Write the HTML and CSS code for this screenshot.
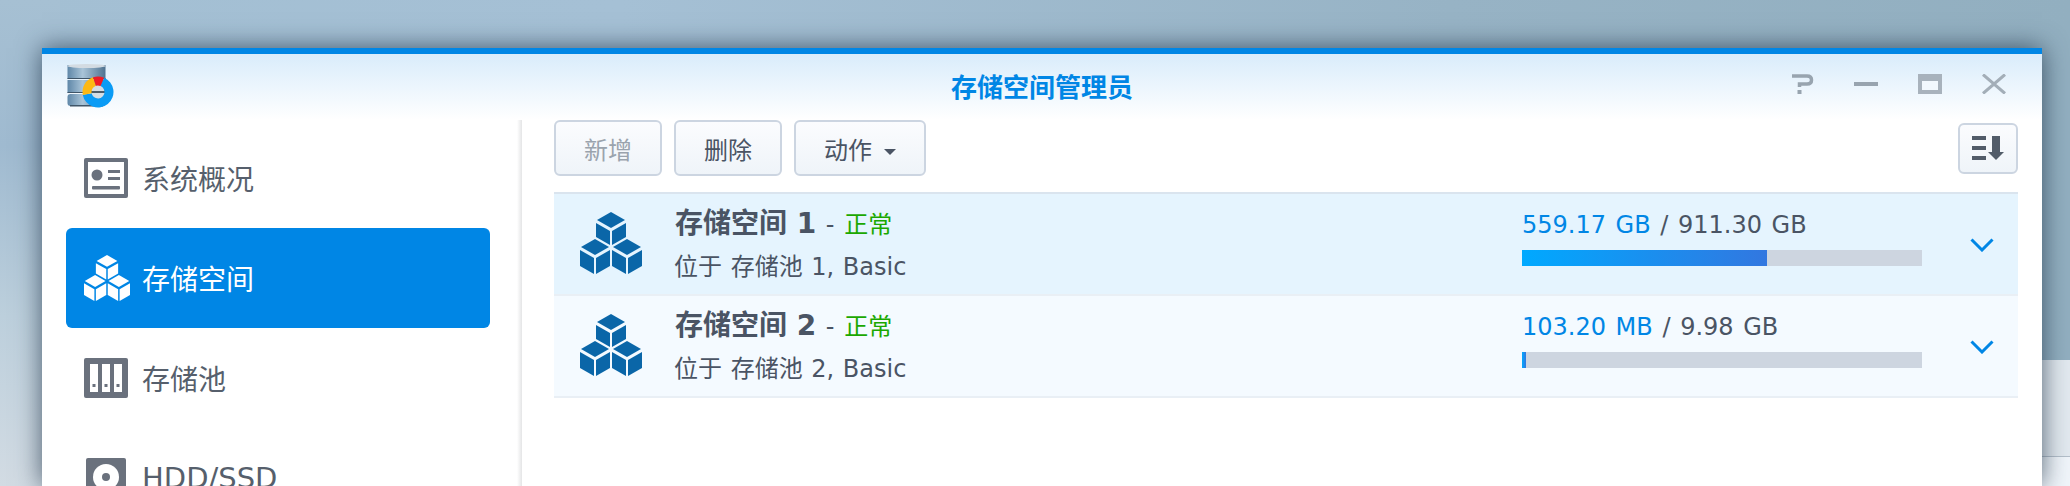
FILE: index.html
```html
<!DOCTYPE html>
<html lang="zh-CN">
<head>
    <meta charset="UTF-8">
    <meta name="viewport" content="width=device-width, initial-scale=1.0">
    <title>存储空间管理员</title>
    <link rel="stylesheet" href="styles.css">
</head>
<body>

<svg class="defs" width="0" height="0">
    <defs>
        <polygon id="cube-top" points="15,0 29,8 15,16 1,8"/>
        <g id="cube-upper">
            <use href="#cube-top"/>
            <polygon points="0,11 14,19 14,33 0,25"/>
            <polygon points="30,11 16,19 16,33 30,25"/>
        </g>
        <g id="cube">
            <use href="#cube-top"/>
            <polygon points="0,11 14,19 14,35 0,27"/>
            <polygon points="30,11 16,19 16,35 30,27"/>
        </g>
        <symbol id="cube-stack" viewBox="0 0 62 62">
            <use href="#cube-upper" x="16" y="0"/>
            <use href="#cube" x="0" y="27"/>
            <use href="#cube" x="32" y="27"/>
        </symbol>
        <linearGradient id="dbMetal" x1="0" x2="1" y1="0" y2="0">
            <stop offset="0" stop-color="#5f87a8"/>
            <stop offset="0.4" stop-color="#a9c4d8"/>
            <stop offset="1" stop-color="#4f7290"/>
        </linearGradient>
    </defs>
</svg>

<!-- window behind, only its edge shows -->
<div class="back-window"></div>

<div class="window">
    <div class="titlebar">
        <svg class="app-icon" width="48" height="44" viewBox="0 0 48 44">
            <rect x="0.5" y="1" width="38" height="14" fill="url(#dbMetal)"/>
            <ellipse cx="19.5" cy="2" rx="19" ry="2" fill="#d3dbe2"/>
            <rect x="0.5" y="14" width="38" height="1" fill="#3f5568"/>
            <rect x="0.5" y="16" width="38" height="13" fill="url(#dbMetal)"/>
            <rect x="0.5" y="28" width="38" height="1" fill="#3f5568"/>
            <rect x="0.5" y="30" width="38" height="12" rx="3" fill="url(#dbMetal)"/>
            <rect x="3" y="41" width="33" height="1.5" fill="#3f5568"/>
            <circle cx="31" cy="28" r="7" fill="#d5dde4"/>
            <rect x="24" y="27" width="14" height="2" fill="#4d5c69"/>
            <path d="M37 13.7 A15.5 15.5 0 1 1 15.8 31 L24.6 29.3 A6.5 6.5 0 1 0 33.5 22 Z" fill="#0a9bf5"/>
            <path d="M15.8 31 A15.5 15.5 0 0 1 26 13.3 L28.9 21.8 A6.5 6.5 0 0 0 24.6 29.3 Z" fill="#fdb813"/>
            <path d="M26 13.3 A15.5 15.5 0 0 1 37 13.7 L33.5 22 A6.5 6.5 0 0 0 28.9 21.8 Z" fill="#ee1c25"/>
        </svg>
        <div class="window-title">存储空间管理员</div>
        <div class="window-controls">
            <svg width="24" height="20" viewBox="0 0 24 20"><path d="M2 2 H17 Q21.5 2 21.5 6 Q21.5 10 17 10 H9.5 V13" fill="none" stroke="#98a4af" stroke-width="3.5"/><rect x="7.5" y="16" width="4" height="4" fill="#98a4af"/></svg>
            <svg width="24" height="20" viewBox="0 0 24 20"><rect x="0" y="8" width="24" height="4" fill="#98a4af"/></svg>
            <svg width="24" height="20" viewBox="0 0 24 20"><rect x="0" y="0" width="24" height="20" fill="#a8b2bc"/><rect x="4" y="7" width="16" height="9" fill="#f2f8fd"/></svg>
            <svg width="24" height="20" viewBox="0 0 24 20"><path d="M1 0.5 L23 19.5 M23 0.5 L1 19.5" stroke="#a3aeb8" stroke-width="3"/></svg>
        </div>
    </div>

    <div class="window-body">
        <div class="sidebar">
            <div class="nav-item">
                <svg class="nav-icon" width="44" height="40" viewBox="0 0 44 40">
                    <rect width="44" height="40" rx="2" fill="#6a717d"/>
                    <rect x="4" y="4" width="36" height="32" fill="#fff"/>
                    <circle cx="13" cy="17" r="5.5" fill="#6a717d"/>
                    <rect x="24" y="12" width="12" height="3" fill="#6a717d"/>
                    <rect x="24" y="19" width="12" height="3" fill="#6a717d"/>
                    <rect x="8" y="28" width="28" height="3.5" rx="1" fill="#6a717d"/>
                </svg>
                <span>系统概况</span>
            </div>
            <div class="nav-item selected">
                <svg class="nav-icon cubes" width="46" height="46"><use href="#cube-stack"/></svg>
                <span>存储空间</span>
            </div>
            <div class="nav-item">
                <svg class="nav-icon" width="44" height="40" viewBox="0 0 44 40">
                    <rect width="44" height="40" rx="2" fill="#6a717d"/>
                    <rect x="6" y="6" width="8" height="28" fill="#fff"/>
                    <rect x="18" y="6" width="8" height="28" fill="#fff"/>
                    <rect x="30" y="6" width="8" height="28" fill="#fff"/>
                    <rect x="8.5" y="26" width="3" height="3" fill="#6a717d"/>
                    <rect x="20.5" y="26" width="3" height="3" fill="#6a717d"/>
                    <rect x="32.5" y="26" width="3" height="3" fill="#6a717d"/>
                </svg>
                <span>存储池</span>
            </div>
            <div class="nav-item">
                <svg class="nav-icon" width="44" height="40" viewBox="0 0 44 40">
                    <rect x="2" y="0" width="40" height="40" rx="2" fill="#6a717d"/>
                    <circle cx="22" cy="19" r="13" fill="#fff"/>
                    <circle cx="22" cy="19" r="4" fill="#6a717d"/>
                </svg>
                <span class="nav-latin">HDD/SSD</span>
            </div>
        </div>

        <div class="content">
            <div class="toolbar">
                <button class="btn" disabled>新增</button>
                <button class="btn">删除</button>
                <button class="btn btn-menu">动作<i class="caret"></i></button>
                <button class="btn btn-sort">
                    <svg width="32" height="24" viewBox="0 0 32 24">
                        <rect x="0" y="0" width="14" height="4" fill="#525c69"/>
                        <rect x="0" y="10" width="14" height="4" fill="#525c69"/>
                        <rect x="0" y="20" width="14" height="4" fill="#525c69"/>
                        <path d="M20 0 H28 V16 H32 L24 24 L16 16 H20 Z" fill="#525c69"/>
                    </svg>
                </button>
            </div>

            <div class="volume-list">
                <div class="volume active">
                    <svg class="volume-icon" width="62" height="62"><use href="#cube-stack"/></svg>
                    <div class="volume-info">
                        <div class="volume-name"><b>存储空间 1</b> - <span class="status">正常</span></div>
                        <div class="volume-desc">位于 存储池 1, Basic</div>
                    </div>
                    <div class="usage">
                        <div class="usage-text"><span class="used">559.17 GB</span> / 911.30 GB</div>
                        <div class="bar"><div class="bar-fill" style="width: 61.3%"></div></div>
                    </div>
                    <svg class="chevron" width="24" height="14" viewBox="0 0 24 14"><path d="M1.5 1.5 L12 12 L22.5 1.5" fill="none" stroke="#0086e5" stroke-width="3"/></svg>
                </div>
                <div class="volume">
                    <svg class="volume-icon" width="62" height="62"><use href="#cube-stack"/></svg>
                    <div class="volume-info">
                        <div class="volume-name"><b>存储空间 2</b> - <span class="status">正常</span></div>
                        <div class="volume-desc">位于 存储池 2, Basic</div>
                    </div>
                    <div class="usage">
                        <div class="usage-text"><span class="used">103.20 MB</span> / 9.98 GB</div>
                        <div class="bar"><div class="bar-fill" style="width: 1%"></div></div>
                    </div>
                    <svg class="chevron" width="24" height="14" viewBox="0 0 24 14"><path d="M1.5 1.5 L12 12 L22.5 1.5" fill="none" stroke="#0086e5" stroke-width="3"/></svg>
                </div>
            </div>
        </div>
    </div>
</div>

</body>
</html>
```

FILE: styles.css
```css
body {
    margin: 0;
    height: 486px;
    overflow: hidden;
    position: relative;
    font-family: "DejaVu Sans", "Noto Sans CJK SC", sans-serif;
    color: #4a5464;
    background:
        linear-gradient(180deg, #a6c0d3 0%, #9fbad0 30%, #bccfdc 65%, #d2dbe3 100%) left / 60px 100% no-repeat,
        linear-gradient(90deg, #a3bfd3 0%, #a5c0d5 30%, #97b3c5 70%, #92afc0 100%);
}
.defs {
    position: absolute;
}
.back-window {
    position: absolute;
    left: 2030px;
    top: 360px;
    width: 60px;
    height: 126px;
    background: linear-gradient(180deg, #e2e9ef 0%, #e2e9ef 76%, #b4bfca 76%, #b4bfca 77%, #f0f5fa 77%);
}
.window {
    position: relative;
    margin: 48px 0 0 42px;
    width: 2000px;
    height: 438px;
    overflow: hidden;
    background-color: #fff;
    border-top: 6px solid #0086e5;
    box-sizing: border-box;
    box-shadow: 0 0 24px rgba(30, 50, 70, 0.75);
}
.titlebar {
    height: 66px;
    display: grid;
    grid-template-columns: 1fr auto 1fr;
    align-items: center;
    background: linear-gradient(180deg, #d9ecfb 0%, #ffffff 100%);
}
.app-icon {
    margin: -2px 0 0 25px;
}
.window-title {
    margin-top: -4px;
    font-family: "Noto Sans CJK SC", sans-serif;
    font-size: 26px;
    font-weight: 700;
    color: #0086e5;
}
.window-controls {
    display: flex;
    justify-content: flex-end;
    gap: 40px;
    padding-right: 36px;
    margin-top: -6px;
}
.window-body {
    display: flex;
}
.sidebar {
    width: 480px;
    height: 380px;
    box-sizing: border-box;
    padding: 8px 32px 0 24px;
    background: linear-gradient(90deg, #ffffff, #e4e5e6) right / 5px 100% no-repeat;
    flex-shrink: 0;
}
.nav-item {
    height: 100px;
    display: flex;
    align-items: center;
    gap: 14px;
    padding-left: 18px;
    border-radius: 6px;
    font-family: "Noto Sans CJK SC", sans-serif;
    font-size: 28px;
    color: #565f6c;
}
.nav-item.selected {
    background-color: #0086e5;
    color: #fff;
}
.nav-latin {
    font-family: "DejaVu Sans", sans-serif;
    font-size: 29px;
}
.nav-icon {
    flex-shrink: 0;
}
.cubes {
    fill: #fff;
    margin-right: -2px;
}
.content {
    flex: 1;
    padding: 0 24px 0 32px;
}
.toolbar {
    display: flex;
    align-items: center;
    gap: 12px;
}
.btn {
    width: 108px;
    height: 56px;
    padding: 0;
    border: 2px solid #ccd5e1;
    border-radius: 6px;
    background: linear-gradient(180deg, #fbfcfe 0%, #eff4f9 100%);
    font-family: "Noto Sans CJK SC", sans-serif;
    font-size: 24px;
    color: #4a5464;
}
.btn[disabled] {
    color: #9aa3ad;
}
.btn-menu {
    width: 132px;
}
.caret {
    display: inline-block;
    margin-left: 12px;
    vertical-align: middle;
    border-top: 6px solid #4a5464;
    border-left: 6px solid transparent;
    border-right: 6px solid transparent;
}
.btn-sort {
    width: 60px;
    height: 51px;
    margin-left: auto;
    display: flex;
    align-items: center;
    justify-content: center;
}
.volume-list {
    margin-top: 16px;
    border-top: 2px solid #dae4ee;
}
.volume {
    display: flex;
    align-items: flex-start;
    height: 102px;
    box-sizing: border-box;
    padding-left: 26px;
    padding-right: 24px;
    background-color: #f4faff;
    border-bottom: 2px solid #e9eff5;
}
.volume.active {
    background-color: #e5f4fe;
}
.volume-icon {
    margin-top: 18px;
    fill: #0a66a8;
    flex-shrink: 0;
}
.volume-info {
    flex: 1;
    margin-left: 33px;
    padding-top: 11px;
}
.volume-name {
    line-height: 36px;
    font-size: 24px;
}
.volume-name b {
    font-size: 28px;
    margin-right: 2px;
}
.status {
    margin-left: 2px;
    color: #1ba800;
    font-family: "Noto Sans CJK SC", sans-serif;
}
.volume-desc {
    margin: 8px 0 0 -1px;
    line-height: 32px;
    font-size: 24px;
    word-spacing: 1px;
}
.usage {
    width: 400px;
    padding-top: 15px;
}
.usage-text {
    line-height: 32px;
    font-size: 24px;
    word-spacing: 2px;
}
.used {
    color: #0086e5;
}
.bar {
    margin-top: 9px;
    height: 16px;
    background-color: #cdd5e0;
}
.bar-fill {
    height: 100%;
    background: linear-gradient(90deg, #00a9ff 0%, #3277e0 100%);
}
.chevron {
    margin: 44px 0 0 48px;
    flex-shrink: 0;
}
```
